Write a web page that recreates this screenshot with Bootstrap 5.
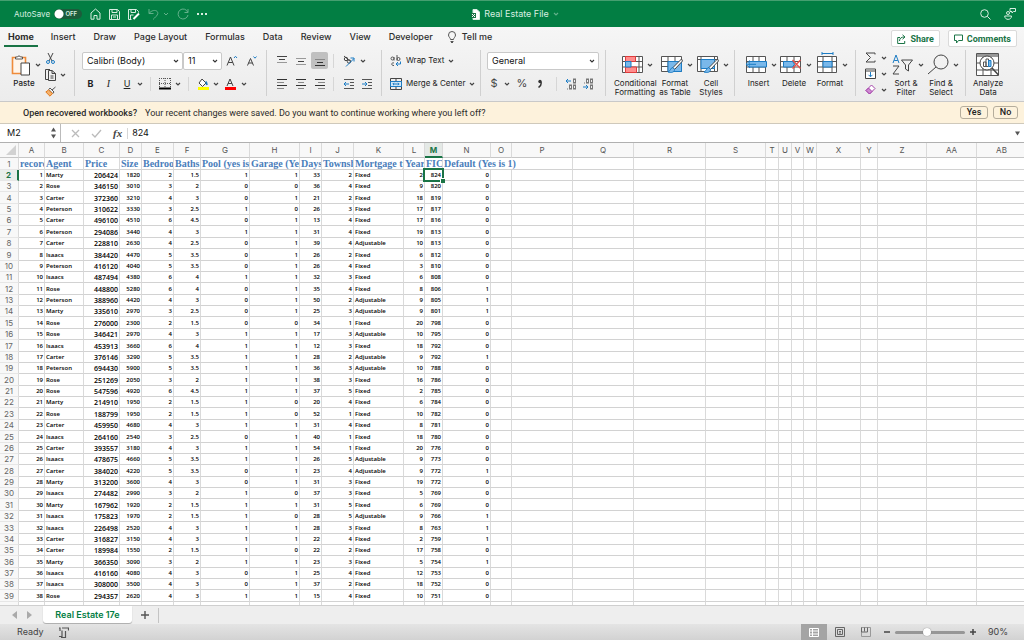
<!DOCTYPE html>
<html lang="en">
<head>
<meta charset="utf-8">
<meta name="viewport" content="width=device-width, initial-scale=1">
<title>Real Estate File</title>
<link href="https://cdn.jsdelivr.net/npm/bootstrap@5.3.0/dist/css/bootstrap.min.css" rel="stylesheet">
<style>
:root{--xl:#027e43;--xl-dark:#1a7446;--ink:#333;--line:#d2d2d2}
body{font-family:Inter,"Liberation Sans",sans-serif;font-size:9px;line-height:12px;color:#222;background:#eee}
button{background:none;border:0;padding:0;color:inherit;line-height:inherit}
svg{display:block;flex:none}
svg:not([fill]){fill:none}
svg:not([stroke]){stroke:currentColor}
.chev{width:6px;height:6px;color:#444;stroke-width:1.2}
.chev.dim{color:inherit}
.titlebar{height:27px;background:var(--xl);border-top:1px solid #459f70;color:#d8eee1;padding:0 8px 0 14px}
.titlebar>div{flex:1 1 0}
.tools{gap:8px}
.dim{opacity:.45}
.autosave{position:relative;gap:4px;font-size:8px}
.autosave input{appearance:none;width:28px;height:10px;margin:0;border-radius:5px;background:radial-gradient(circle at 5px 5px,#fff 4px,transparent 5px),#1c5c3b}
.autosave span{position:absolute;right:5px;font-size:6px;line-height:10px;font-weight:600}
.doctitle{font-size:9px}
.ribbon{background:linear-gradient(#f6f6f6,#ececec);border-bottom:1px solid #c9c9c9;height:75px}
.tabs{height:20px;padding:0 7px 0 4px;font-size:9px;font-weight:500;color:#2d2d2d}
.tabs a{color:inherit;text-decoration:none;line-height:20px;height:20px;border-bottom:2px solid transparent;white-space:nowrap;margin-right:18px}
.tabs a.active{font-weight:700;border-color:var(--xl-dark);margin-right:13px;padding:0 4px}
.tabs .tell{gap:5px;margin-left:-4px}
.tabs .tell svg{margin-top:4px}
.pill{background:#fff;border:1px solid #dadada;border-radius:2px;height:17px;font-family:Roboto,sans-serif;font-size:9px;font-weight:700;color:var(--xl-dark);gap:4px;padding:0 5px}
.tools-row{height:54px;padding:3px 0 5px}
.grp{height:46px;border-right:1px solid #d0d0d0;flex:none;font-size:8px;line-height:9px;font-weight:500}
.grp:last-child{border:0}
.bar{display:grid;align-items:center;justify-items:center;height:17px}
.vr1{width:1px;height:14px;background:#d6d6d6}
.pick{appearance:none;width:100%;height:18px;border:1px solid #c9c9c9;border-radius:2px;font-size:9px;line-height:12px;padding:0 4px;color:#111;
 background:#fff url("data:image/svg+xml,%3Csvg xmlns='http://www.w3.org/2000/svg' width='6' height='6'%3E%3Cpath d='M1 2l2 2 2-2' fill='none' stroke='%23333' stroke-width='1.1'/%3E%3C/svg%3E") no-repeat right 3px center}
.on{background:#c0c0c0;border-radius:2px;width:17px;height:17px}
.g-paste{width:75px;padding-left:10px}
.g-font{width:192px;padding:2px 0 0 7px}
.g-align{width:115px;padding:2px 0 0 5px}
.g-wrap{width:99px;padding:2px 0 0 8px}
.g-num{width:125px;padding:2px 6px 0 6px}
.g-style{width:129px;padding-left:8px}
.g-cells{width:121px;padding-left:6px}
.g-edit{width:110px;padding-left:9px}
.g-align .bar+.bar,.wr+.wr{margin-top:6px}
.g-font .bar:first-child{grid-template-columns:101px 39px 20px 20px;height:18px;justify-items:start}
.g-font .bar:first-child button{justify-self:center}
.g-font .bar+.bar{grid-template-columns:17px 19px 18px 8px 13px 15px 12px 9px 19px 7px 21px 7px;margin-top:5px}
.g-align .bar{grid-template-columns:20px 18px 19px 9px 22px 14px}
.g-num .bar{grid-template-columns:14px 12px 18px 18px 14px 16px 18px;margin-top:5px}
.sym{font-size:11px;font-weight:400;color:#444}
.wr{height:17px;gap:4px}
.big{flex:none;text-align:center}
.big .pic{height:29px;gap:4px;justify-content:center;padding-left:4px}
.small-col{gap:5px}
.notice{height:22px;background:#fdf2dc;border-bottom:1px solid #cfc9bb;padding:0 6px 0 23px;font-family:Roboto,"Liberation Sans",sans-serif;font-size:9px;color:#2b2b2b}
.notice b{font-weight:500}
.notice .ask{height:13px;line-height:11px;border:1px solid #b5ad9c;border-radius:3px;width:28px;font-weight:500;color:#222}
.fbar{height:19px;background:#fff;border-bottom:1px solid #b0b0b0}
.fbar input{border:0;padding:0;outline:0;background:none;font-size:9px;color:#111}
.namebox{width:61px;border-right:1px solid #bbb;padding:0 3px 0 7px}
.namebox input{width:40px}
.fx{font:italic 700 11px "Liberation Serif",serif;color:#444}
.sheet{flex:1 1 0;min-height:0;overflow:hidden;background:#fff;border-bottom:1px solid #cfcfcf}
.cells{table-layout:fixed;width:100%;border-collapse:separate;border-spacing:0;font-family:"Open Sans",sans-serif;font-weight:600;font-size:6px;line-height:9px;color:#000}
.cells td,.cells th{padding:1px 1px 0;border-right:1px solid #dadada;border-bottom:1px solid var(--line);white-space:nowrap;overflow:hidden;height:11px;text-align:right}
.cells thead th{height:15px;font:400 8px/13px Inter,sans-serif;text-align:center;background:#f8f8f8;color:#555;border-bottom-color:#c6c6c6;position:relative}
.cells tbody th{font:400 8px/9px Inter,sans-serif;text-align:center;background:#f8f8f8;color:#666;border-bottom-color:#e6e6e6}
.cells tbody tr:first-child>*,.cells tbody tr:nth-child(8n+4)>*,.cells tbody tr:nth-child(8n+7)>*,.cells tbody tr:nth-child(8n+9)>*{height:12px}
.cells td.txt{text-align:left}
.cells td.price{font-size:7px}
.cells .names td{font:700 10px/10px "Liberation Serif",serif;color:#4a7ebb;text-align:left}
.cells .names .spill{overflow:visible}
.cells thead th.cur{background:#e4e9e6;color:var(--xl-dark);font-weight:700;border-bottom:2px solid var(--xl-dark);line-height:12px}
.cells tbody th.cur{color:var(--xl-dark);font-weight:700;border-right:2px solid var(--xl-dark);background:#e9eeeb}
.cells td.sel{position:relative;overflow:visible}
.cells td.sel::before{content:"";position:absolute;inset:-2px;border:2px solid var(--xl-dark)}
.cells td.sel::after{content:"";position:absolute;right:-3px;bottom:-3px;width:5px;height:5px;background:var(--xl-dark);border:1px solid #fff;border-width:1px 0 0 1px}
.corner{position:absolute;right:2px;bottom:2px;border:5px solid transparent;border-right-color:#d2d2d2;border-bottom-color:#d2d2d2}
.sheettabs{height:18px;padding-left:12px;background:#eee}
.sheettabs .cur{background:#fff;color:var(--xl);font-weight:600;font-size:9px;width:89px;height:17px;border-radius:0 0 3px 3px;box-shadow:0 1px 1px #aaa;margin-left:11px;align-self:flex-start}
.sheettabs .add{width:27px;height:15px;border-right:1px solid #c4c4c4}
.status{height:16px;background:linear-gradient(#e4e4e4,#d2d2d2);padding:0 16px 0 17px;color:#444}
.view{width:26px;height:16px;color:#666}
.view.cur{background:#a4a4a4;color:#fff}
.zoom{appearance:none;width:70px;height:3px;border-radius:2px;background:#979797;margin:0 5px}
.zoom::-webkit-slider-thumb{appearance:none;width:8px;height:8px;border-radius:50%;background:#fff;box-shadow:0 0 1px #666}
</style>
</head>
<body class="d-flex flex-column vh-100 overflow-hidden">
<svg width="0" height="0" class="position-absolute" aria-hidden="true">
 <symbol id="chev" viewBox="0 0 6 6"><path d="M1 2l2 2 2-2"/></symbol>
 <symbol id="brush" viewBox="0 0 16 16"><path d="M14.500 1L6 9.500l1.500 2L15.500 3z" fill="#fff" stroke="#444"/><path d="M6 9.500C3.500 9.500 4 12.500 1 14c3 1 6.500.5 6.500-2.500z" fill="#7ab8ea" stroke="#1c7cc4"/></symbol>
</svg>

<header class="titlebar d-flex align-items-center flex-shrink-0">
 <div class="tools d-flex align-items-center">
  <label class="autosave d-flex align-items-center">AutoSave <input type="checkbox"><span>OFF</span></label>
  <button aria-label="Home"><svg width="11" height="12" viewBox="0 0 11 12"><path d="M1 5l4.500-4L10 5v6.200H7V7.500H4v3.700H1z"/></svg></button>
  <button aria-label="Save"><svg width="11" height="11" viewBox="0 0 11 11"><path d="M.5.5h8l2 2v8H.5zM3 .5v3h5v-3M2.500 10.500V6h6v4.500M4 8h3"/></svg></button>
  <button aria-label="Save as"><svg width="12" height="11" viewBox="0 0 12 11"><path d="M10.500 3.500V2.500l-2-2h-8v10h3M3 .5v3h4.500v-3M2.500 10.500V6h3"/><path d="M11 4.500L5.500 10" stroke-width="2" stroke="#fff"/></svg></button>
  <button class="dim d-flex align-items-center gap-1" aria-label="Undo"><svg width="11" height="12" viewBox="0 0 11 12"><path d="M1 1v4.500h4.500M1.200 5.200C4 1.500 10 1.500 9.800 5.500c-.3 2-2.800 4-4.800 6"/></svg><svg width="6" height="6"><use href="#chev"/></svg></button>
  <button class="dim" aria-label="Redo"><svg width="12" height="12" viewBox="0 0 12 12"><path d="M11 1v3.500H7.500M10.800 4.300A5 5 0 1 0 11 7"/></svg></button>
  <button aria-label="More"><svg width="10" height="2" viewBox="0 0 10 2" fill="currentColor" stroke="none"><path d="M0 0h2v2H0zM4 0h2v2H4zM8 0h2v2H8z"/></svg></button>
 </div>
 <div class="doctitle d-flex align-items-center justify-content-center gap-1">
  <svg width="9" height="11" viewBox="0 0 9 11"><path d="M2 .5h4l2.500 2.500v7.500H2z" fill="#fff" stroke="#d8eee1"/><path d="M0 4h5v5H0z" fill="#1a7446" stroke="none"/><path d="M1 5l3 3M4 5L1 8" stroke="#fff"/></svg>
  <span>Real Estate File</span><svg class="chev dim"><use href="#chev"/></svg>
 </div>
 <div class="d-flex align-items-center justify-content-end" style="gap:13px">
  <button aria-label="Search"><svg width="11" height="11" viewBox="0 0 11 11"><circle cx="4.500" cy="4.500" r="3.800"/><path d="M7.300 7.300L10.500 10.500"/></svg></button>
  <button aria-label="Collaborate"><svg width="12" height="12" viewBox="0 0 12 12"><path d="M6 .5h5.500v3H9.500L8 5V3.500H6zM.7 8h6.800c0 4.500-6.800 4.500-6.800 0z"/><circle cx="4" cy="5" r="1.500"/></svg></button>
 </div>
</header>

<section class="ribbon flex-shrink-0">
 <nav class="tabs d-flex align-items-start">
  <a href="#" class="active">Home</a><a href="#">Insert</a><a href="#">Draw</a><a href="#">Page Layout</a><a href="#">Formulas</a><a href="#">Data</a><a href="#">Review</a><a href="#">View</a><a href="#">Developer</a>
  <a href="#" class="tell d-flex align-items-start"><svg width="10" height="12" viewBox="0 0 10 12" stroke="#555"><path d="M3.500 8.500C3.500 7 1.500 6 1.500 4a3.500 3.500 0 0 1 7 0c0 2-2 3-2 4.500zM3.500 10.500h3M4 11.500h2"/></svg>Tell me</a>
  <div class="ms-auto d-flex gap-2" style="padding-top:3px">
   <button class="pill d-flex align-items-center"><svg width="9" height="10" viewBox="0 0 9 10"><path d="M3 3.500H.7v6h7V7M2.500 7c0-3 2-4 5-4M5.500 .8L8 3 5.500 5.200"/></svg>Share</button>
   <button class="pill d-flex align-items-center"><svg width="9" height="10" viewBox="0 0 9 10"><path d="M.5 1h8v5.500H4.500L2.500 9V6.500h-2z"/></svg>Comments</button>
  </div>
 </nav>
 <div class="tools-row d-flex">
  <div class="grp g-paste d-flex">
   <div class="big" style="width:28px"><div class="pic d-flex align-items-center"><svg width="20" height="22" viewBox="0 0 20 22"><path d="M1.500 3.500h13v16h-13z" stroke="#ef8b3a" stroke-width="1.600" fill="#fff5ea"/><path d="M4.500 5V3h2a1.600 1.600 0 0 1 3 0h2v2z" fill="#fff" stroke="#555"/><path d="M10 9h8.500v12H10z" fill="#fff" stroke="#444"/></svg><svg class="chev"><use href="#chev"/></svg></div>Paste</div>
   <div class="small-col d-flex flex-column" style="margin-left:7px;padding-top:3px">
    <button aria-label="Cut"><svg width="11" height="11" viewBox="0 0 11 11"><path d="M3 0l4 8M8 0L4 8" stroke="#444"/><circle cx="3" cy="9" r="1.500" stroke="#1c7cc4"/><circle cx="8" cy="9" r="1.500" stroke="#1c7cc4"/></svg></button>
    <button class="d-flex align-items-center gap-1" aria-label="Copy"><svg width="11" height="12" viewBox="0 0 11 12" stroke="#444"><path d="M3 10.500H.5v-10H5M3.500 1.500H7l3.500 3v7h-7zM7 1.500v3h3.500M5.500 7h3M5.500 9h3"/></svg><svg class="chev"><use href="#chev"/></svg></button>
    <button aria-label="Format painter"><svg width="12" height="11" viewBox="0 0 12 11"><path d="M10.500 1L7 4M5 2l4 4-1.200 1.500L3.800 3.500z" stroke="#555" fill="#fff"/><path d="M3.500 4L.8 6 5 10.200 7.500 7.500z" fill="#f6b26b" stroke="#e07a1f"/></svg></button>
   </div>
  </div>
  <div class="grp g-font">
   <div class="bar">
    <select class="pick" aria-label="Font"><option>Calibri (Body)</option></select>
    <select class="pick" aria-label="Font size"><option>11</option></select>
    <button aria-label="Increase font size"><svg width="12" height="12" viewBox="0 0 12 12"><path d="M1 10.500L4.500 2l3.500 8.500M2.200 7.500h4.600" stroke="#444"/><path d="M8 3l1.500-1.700L11 3" stroke="#1c7cc4"/></svg></button>
    <button aria-label="Decrease font size"><svg width="12" height="12" viewBox="0 0 12 12"><path d="M1.500 10.500l3-7 3 7M2.500 8h4" stroke="#444"/><path d="M7.500 1.500L9 3.200l1.500-1.700" stroke="#1c7cc4"/></svg></button>
   </div>
   <div class="bar">
    <button class="fw-bold" style="font-size:9px">B</button><button style="font:italic 10px 'Liberation Serif',serif">I</button><button class="text-decoration-underline" style="font-size:9px;font-weight:400">U</button><svg class="chev"><use href="#chev"/></svg><i class="vr1"></i>
    <button aria-label="Borders"><svg width="12" height="12" viewBox="0 0 12 12" stroke="#555"><path d="M.5 0v10M6 0v10M11.500 0v10M0 .5h12M0 5.500h12" stroke-dasharray="1 1"/><path d="M0 10.500h12" stroke="#000" stroke-width="2"/></svg></button><svg class="chev"><use href="#chev"/></svg><i class="vr1"></i>
    <button aria-label="Fill colour"><svg width="12" height="12" viewBox="0 0 12 12"><path d="M5 1l4 4-3.500 3.500L2 5z" stroke="#444" fill="#fff"/><path d="M9 3.500l1 3.500" stroke="#1c7cc4" stroke-width="1.800"/><path d="M1 10.500h11" stroke="#ff0" stroke-width="3"/></svg></button><svg class="chev"><use href="#chev"/></svg>
    <button aria-label="Font colour"><svg width="12" height="12" viewBox="0 0 12 12"><path d="M3 8l3-7 3 7M4 5.500h4" stroke="#444"/><path d="M1 10.500h11" stroke="#f00" stroke-width="3"/></svg></button><svg class="chev"><use href="#chev"/></svg>
   </div>
  </div>
  <div class="grp g-align">
   <div class="bar">
    <button aria-label="Top align"><svg width="12" height="12" viewBox="0 0 12 12" stroke="#444"><path d="M1 1.500h10M3 4.500h6"/><path d="M1 7.500h10" stroke="#999"/></svg></button>
    <button aria-label="Middle align"><svg width="12" height="12" viewBox="0 0 12 12" stroke="#999"><path d="M1 3.500h10M1 9.500h10"/><path d="M3 6.500h6" stroke="#444"/></svg></button>
    <button class="on d-flex align-items-center justify-content-center" aria-label="Bottom align"><svg width="12" height="12" viewBox="0 0 12 12" stroke="#333"><path d="M1 4.500h10" stroke="#888"/><path d="M3 7.500h6M1 10.500h10"/></svg></button>
    <i class="vr1"></i>
    <button aria-label="Orientation"><svg width="12" height="12" viewBox="0 0 12 12"><circle cx="3" cy="4" r="1.700" stroke="#444"/><circle cx="6" cy="6.500" r="1.700" stroke="#444"/><path d="M1 1l7 6" stroke="#444"/><path d="M3 11.500l8-8M7.500 3H11v3.500" stroke="#1c7cc4"/></svg></button>
    <svg class="chev" style="justify-self:start"><use href="#chev"/></svg>
   </div>
   <div class="bar">
    <button aria-label="Align left"><svg width="12" height="10" viewBox="0 0 12 10"><path d="M1 .5h10M1 6.500h10" stroke="#333"/><path d="M1 3.500h7M1 9.500h7" stroke="#888"/></svg></button>
    <button aria-label="Centre"><svg width="12" height="10" viewBox="0 0 12 10"><path d="M1 .5h10M1 6.500h10" stroke="#333"/><path d="M3 3.500h6M3 9.500h6" stroke="#888"/></svg></button>
    <button aria-label="Align right"><svg width="12" height="10" viewBox="0 0 12 10"><path d="M1 .5h10M1 6.500h10" stroke="#333"/><path d="M4 3.500h7M4 9.500h7" stroke="#888"/></svg></button>
    <i class="vr1"></i>
    <button aria-label="Decrease indent"><svg width="12" height="10" viewBox="0 0 12 10"><path d="M1 .5h10M7 3.500h4M7 6.500h4M1 9.500h10" stroke="#555"/><path d="M6 5H1M3 3L1 5l2 2" stroke="#1c7cc4"/></svg></button>
    <button aria-label="Increase indent"><svg width="12" height="10" viewBox="0 0 12 10"><path d="M1 .5h10M7 3.500h4M7 6.500h4M1 9.500h10" stroke="#555"/><path d="M1 5h5M4 3l2 2-2 2" stroke="#1c7cc4"/></svg></button>
   </div>
  </div>
  <div class="grp g-wrap">
   <button class="wr d-flex align-items-center"><svg width="12" height="12" viewBox="0 0 12 12"><circle cx="2.500" cy="3.500" r="1.500" stroke="#555"/><path d="M4 2v3.500M7 0v5.500M4 8c-3-1-3 3 0 2.500" stroke="#555"/><circle cx="8.500" cy="4" r="1.500" stroke="#555"/><path d="M10.500 6.500v2.500H6M8 7L6 9l2 2" stroke="#1c7cc4"/></svg>Wrap Text<svg class="chev"><use href="#chev"/></svg></button>
   <button class="wr d-flex align-items-center"><svg width="12" height="12" viewBox="0 0 12 12"><path d="M.5.5h11v11H.5zM6 .5v3M6 8.500v3" stroke="#444"/><path d="M.5 3.500h11v5H.5z" fill="#d3e8f8" stroke="#1c7cc4"/><path d="M3 6h6M4 4.800L2.800 6 4 7.200M8 4.800L9.200 6 8 7.200" stroke="#1c7cc4"/></svg>Merge &amp; Center<svg class="chev"><use href="#chev"/></svg></button>
  </div>
  <div class="grp g-num">
   <select class="pick d-block" aria-label="Number format"><option>General</option></select>
   <div class="bar">
    <button class="sym">$</button><svg class="chev"><use href="#chev"/></svg><button class="sym">%</button><button aria-label="Comma style"><svg width="6" height="9" viewBox="0 0 6 9"><path d="M1.500 8.500C3.500 7.500 4.500 5.500 4 3" stroke="#333" stroke-width="1.400"/><circle cx="3" cy="2.500" r="1.700" fill="#333" stroke="none"/></svg></button><i class="vr1"></i>
    <button aria-label="Increase decimal"><svg width="12" height="12" viewBox="0 0 12 12"><path d="M6 3H1M3 1L1 3l2 2" stroke="#1c7cc4"/><g stroke="#777"><rect x="8.500" y="1" width="2" height="4"/><rect x="4.500" y="7" width="2" height="4"/><rect x="8.500" y="7" width="2" height="4"/><path d="M2.500 10.500v1"/></g></svg></button>
    <button aria-label="Decrease decimal"><svg width="12" height="12" viewBox="0 0 12 12"><path d="M1 9h5M4 7l2 2-2 2" stroke="#1c7cc4"/><g stroke="#777"><rect x="4.500" y="1" width="2" height="4"/><rect x="8.500" y="1" width="2" height="4"/><rect x="8.500" y="7" width="2" height="4"/><path d="M2.500 4.500v1"/></g></svg></button>
   </div>
  </div>
  <div class="grp g-style d-flex">
   <button class="big" style="width:42px"><span class="pic d-flex align-items-center"><svg width="21" height="17" viewBox="0 0 21 17"><path d="M.5.5h20v16H.5zM.5 5.500h20M.5 11h20M17 .5v16" stroke="#555" fill="#fff"/><path d="M3.500.5h10v5h-10zM3.500 11h11v5.500h-11z" fill="#ff8d8d" stroke="#e03c3c"/><path d="M3.500 5.500H9V11H3.500z" fill="#7ab8ea" stroke="#1c7cc4"/></svg><svg class="chev"><use href="#chev"/></svg></span>Conditional<br>Formatting</button>
   <button class="big" style="width:38px"><span class="pic d-flex align-items-center"><svg width="22" height="19" viewBox="0 0 22 19"><path d="M.5 1.500h20v15H.5zM.5 6.500h20M.5 11.500h20M7 1.500v15M14 1.500v15" stroke="#555" fill="#fff"/><path d="M7 6.500h13.500v10H7z" fill="#7ab8ea" stroke="#1c7cc4"/><use href="#brush" x="6" y="3" width="16" height="16"/></svg><svg class="chev"><use href="#chev"/></svg></span>Format<br>as Table</button>
   <button class="big" style="width:34px"><span class="pic d-flex align-items-center"><svg width="22" height="19" viewBox="0 0 22 19"><path d="M.5 1.500h20v15H.5zM.5 4.500h20M4 1.500v15M17.500 1.500v15" stroke="#555" fill="#fff"/><path d="M4 4.500h13.500v9H4z" fill="#7ab8ea" stroke="#1c7cc4"/><use href="#brush" x="6" y="3" width="16" height="16"/></svg><svg class="chev"><use href="#chev"/></svg></span>Cell<br>Styles</button>
  </div>
  <div class="grp g-cells d-flex">
   <button class="big align-self-start" style="width:35px"><span class="pic d-flex align-items-center"><svg width="22" height="17" viewBox="0 0 22 17"><path d="M1.500.5h19v16h-19zM1.500 5.500h19M1.500 11h19M8 .5v16M14 .5v16" stroke="#555" fill="#fff"/><path d="M4 5.500h17.500V11H4z" fill="#7ab8ea" stroke="#1c7cc4"/><path d="M11 8.300H1M5 4.500L1 8.300l4 3.700" stroke="#1c7cc4"/></svg><svg class="chev"><use href="#chev"/></svg></span>Insert</button>
   <button class="big align-self-start" style="width:36px"><span class="pic d-flex align-items-center"><svg width="22" height="17" viewBox="0 0 22 17"><path d="M.5.5h20v16H.5zM.5 5.500h20M.5 11h20M7 .5v16M14 .5v16" stroke="#555" fill="#fff"/><path d="M3.500 5.500h9l2 2.700-2 2.800h-9z" fill="#7ab8ea" stroke="#1c7cc4"/><path d="M12.500 4l8 8.500M20.500 4l-8 8.500" stroke="#e8504b" stroke-width="1.300"/></svg><svg class="chev"><use href="#chev"/></svg></span>Delete</button>
   <button class="big align-self-start" style="width:36px"><span class="pic d-flex align-items-center"><svg width="21" height="25" viewBox="0 0 21 25"><path d="M.5 4.500h19v16H.5zM.5 9.500h19M.5 15h19M6 4.500v16M15 4.500v16" stroke="#555" fill="#fff"/><path d="M6 9.500h9V15H6z" fill="#7ab8ea" stroke="#1c7cc4"/><path d="M5 1.500h11M5 0v3M16 0v3" stroke="#1c7cc4"/></svg><svg class="chev"><use href="#chev"/></svg></span>Format</button>
  </div>
  <div class="grp g-edit d-flex">
   <div class="small-col d-flex flex-column" style="padding-top:2px;width:24px">
    <button class="d-flex align-items-center" style="gap:5px" aria-label="AutoSum"><svg width="11" height="11" viewBox="0 0 11 11" stroke="#444"><path d="M10 2.500V1H1l4.500 4.500L1 10h9V8.500"/></svg><svg class="chev"><use href="#chev"/></svg></button>
    <button class="d-flex align-items-center" style="gap:5px" aria-label="Fill"><svg width="11" height="11" viewBox="0 0 11 11"><path d="M.5 1h10v9.500H.5zM.5 3h10" stroke="#444" fill="#fff"/><path d="M5.500 4v4.500M3.500 6.800l2 2 2-2" stroke="#1c7cc4"/></svg><svg class="chev"><use href="#chev"/></svg></button>
    <button class="d-flex align-items-center" style="gap:5px" aria-label="Clear"><svg width="11" height="11" viewBox="0 0 11 11"><path d="M6.500 1L10 4.500 4.500 10 1 6.500z" fill="#fff" stroke="#a33fa8"/><path d="M3.500 4L7 7.500 4.500 10 1 6.500z" fill="#cf8ad2" stroke="#a33fa8"/></svg><svg class="chev"><use href="#chev"/></svg></button>
   </div>
   <button class="big" style="width:34px"><span class="pic d-flex align-items-center"><svg width="22" height="21" viewBox="0 0 22 21"><path d="M1 9l3-8 3 8M2.200 6.500h3.600" stroke="#1c7cc4"/><path d="M1 12h6l-6 8h6" stroke="#444"/><path d="M9.500 6h11l-4 5v6l-3-2v-4z" stroke="#444"/></svg><svg class="chev"><use href="#chev"/></svg></span>Sort &amp;<br>Filter</button>
   <button class="big" style="width:36px"><span class="pic d-flex align-items-center"><svg width="22" height="21" viewBox="0 0 22 21" stroke="#444"><circle cx="14" cy="8" r="7"/><path d="M9 13l-8 7"/></svg><svg class="chev"><use href="#chev"/></svg></span>Find &amp;<br>Select</button>
  </div>
  <div class="grp" style="padding-left:7px">
   <button class="big"><span class="pic d-flex align-items-center p-0"><svg width="24" height="24" viewBox="0 0 24 24"><path d="M.5.5h22v22H.5zM.5 17h22M7 4v19M15 4v19M.5 10h22" stroke="#555" fill="#fff"/><path d="M1 1h21v3H1z" fill="#999" stroke="none"/><circle cx="11" cy="10" r="7" fill="#fff" stroke="#444"/><path d="M16 15l6.500 7" stroke="#444" stroke-width="1.500"/><path d="M7.500 9H10v4.500H7.500zM10 6h2.500v7.500H10z" stroke="#555"/><path d="M12.500 7.500H15v6h-2.500z" fill="#7ab8ea" stroke="#1c7cc4"/></svg></span>Analyze<br>Data</button>
  </div>
 </div>
</section>

<div class="notice d-flex align-items-center flex-shrink-0">
 <b>Open recovered workbooks?</b><span class="ms-2">Your recent changes were saved. Do you want to continue working where you left off?</span>
 <button class="ask ms-auto">Yes</button><button class="ask" style="width:25px;margin-left:5px">No</button>
</div>

<div class="fbar d-flex align-items-center flex-shrink-0">
 <div class="namebox d-flex align-items-center justify-content-between h-100"><input aria-label="Name box" value="M2"><svg width="7" height="12" viewBox="0 0 7 12"><path d="M1 4.500l2.500-4 2.500 4zM1 7.500l2.500 4 2.500-4z" fill="#555" stroke="none"/></svg></div>
 <button style="margin-left:10px" aria-label="Cancel"><svg width="9" height="9" viewBox="0 0 9 9" stroke="#bbb" stroke-width="1.300"><path d="M1 1l7 7M8 1L1 8"/></svg></button>
 <button style="margin-left:11px" aria-label="Enter"><svg width="11" height="9" viewBox="0 0 11 9" stroke="#bbb" stroke-width="1.300"><path d="M1 5l3 3 6-7"/></svg></button>
 <button class="fx" style="margin:0 5px 0 11px">fx</button><i class="vr1" style="height:11px"></i>
 <input class="flex-grow-1 ms-1" aria-label="Formula" value="824">
 <button class="me-1" aria-label="Expand"><svg width="5" height="5" viewBox="0 0 5 5"><path d="M0 .5h5l-2.500 4z" fill="#555" stroke="none"/></svg></button>
</div>

<main class="sheet"><table class="cells"><colgroup id="cols"></colgroup><thead><tr id="letters"></tr></thead><tbody id="rows"></tbody></table></main>

<div class="sheettabs d-flex align-items-center flex-shrink-0">
 <svg width="20" height="8" viewBox="0 0 20 8"><path d="M5 0v8L0 4zM15 0v8l5-4z" fill="#aaa" stroke="none"/></svg>
 <button class="cur">Real Estate 17e</button>
 <button class="add d-flex align-items-center justify-content-center" aria-label="Add sheet"><svg width="8" height="8" viewBox="0 0 8 8" stroke="#555" stroke-width="1.400"><path d="M4 0v8M0 4h8"/></svg></button>
</div>
<footer class="status d-flex align-items-center flex-shrink-0">
 <span>Ready</span>
 <svg class="me-auto" style="margin-left:14px" width="11" height="11" viewBox="0 0 11 11" stroke="#555"><path d="M4 1h6.500v2.500M4 3.500V9.500H1M7.500 4v6.500H3M1 1h1v3" stroke-width="1.200"/></svg>
 <button class="view cur d-flex align-items-center justify-content-center" aria-label="Normal view"><svg width="10" height="9" viewBox="0 0 10 9"><path d="M.5.5h9v8h-9zM.5 3h9M.5 6h9M3.500.5v8"/></svg></button>
 <button class="view d-flex align-items-center justify-content-center" aria-label="Page layout view"><svg width="10" height="10" viewBox="0 0 10 10"><path d="M.5.5h9v9h-9zM2.500 2.500h5v5h-5zM4 4.500h2M4 6h2"/></svg></button>
 <button class="view d-flex align-items-center justify-content-center" aria-label="Page break view"><svg width="10" height="10" viewBox="0 0 10 10"><path d="M.5.5h9v9h-9z" stroke="#999"/><path d="M.5.500v4.500h6V.5M3.500.5v4"/></svg></button>
 <svg style="margin-left:5px" width="6" height="6" viewBox="0 0 6 6" stroke-width="1.500"><path d="M0 3h6"/></svg>
 <input class="zoom" type="range" min="10" max="150" value="74" aria-label="Zoom">
 <svg width="6" height="6" viewBox="0 0 6 6" stroke-width="1.500"><path d="M0 3h6M3 0v6"/></svg>
 <span style="margin-left:12px">90%</span>
</footer>

<script>
const widths=[19,26,39,36,22,32,27,49,50,22,32,50,21,18,48,21,61,61,72,60,13,13,12,13,44,17,49,50,50];
const letters='A B C D E F G H I J K L M N O P Q R S T U V W X Y Z AA AB'.split(' ');
const names=['record','Agent','Price','Size','Bedrooms','Baths','Pool (yes is 1)','Garage (Yes is 1)','Days','Township','Mortgage type','Year','FICO','Default (Yes is 1)'];
const data=`Marty 206424 1820 2 1.5 1 1 33 2 Fixed 2 824 0
Rose 346150 3010 3 2 0 0 36 4 Fixed 9 820 0
Carter 372360 3210 4 3 0 1 21 2 Fixed 18 819 0
Peterson 310622 3330 3 2.5 1 0 26 3 Fixed 17 817 0
Carter 496100 4510 6 4.5 0 1 13 4 Fixed 17 816 0
Peterson 294086 3440 4 3 1 1 31 4 Fixed 19 813 0
Carter 228810 2630 4 2.5 0 1 39 4 Adjustable 10 813 0
Isaacs 384420 4470 5 3.5 0 1 26 2 Fixed 6 812 0
Peterson 416120 4040 5 3.5 0 1 26 4 Fixed 3 810 0
Isaacs 487494 4380 6 4 1 1 32 3 Fixed 6 808 0
Rose 448800 5280 6 4 0 1 35 4 Fixed 8 806 1
Peterson 388960 4420 4 3 0 1 50 2 Adjustable 9 805 1
Marty 335610 2970 3 2.5 0 1 25 3 Adjustable 9 801 1
Rose 276000 2300 2 1.5 0 0 34 1 Fixed 20 798 0
Rose 346421 2970 4 3 1 1 17 3 Adjustable 10 795 0
Isaacs 453913 3660 6 4 1 1 12 3 Fixed 18 792 0
Carter 376146 3290 5 3.5 1 1 28 2 Adjustable 9 792 1
Peterson 694430 5900 5 3.5 1 1 36 3 Adjustable 10 788 0
Rose 251269 2050 3 2 1 1 38 3 Fixed 16 786 0
Rose 547596 4920 6 4.5 1 1 37 5 Fixed 2 785 0
Marty 214910 1950 2 1.5 1 0 20 4 Fixed 6 784 0
Rose 188799 1950 2 1.5 1 0 52 1 Fixed 10 782 0
Carter 459950 4680 4 3 1 1 31 4 Fixed 8 781 0
Isaacs 264160 2540 3 2.5 0 1 40 1 Fixed 18 780 0
Carter 393557 3180 4 3 1 1 54 1 Fixed 20 776 0
Isaacs 478675 4660 5 3.5 1 1 26 5 Adjustable 9 773 0
Carter 384020 4220 5 3.5 0 1 23 4 Adjustable 9 772 1
Marty 313200 3600 4 3 0 1 31 3 Fixed 19 772 0
Isaacs 274482 2990 3 2 1 0 37 3 Fixed 5 769 0
Marty 167962 1920 2 1.5 1 1 31 5 Fixed 6 769 0
Isaacs 175823 1970 2 1.5 1 0 28 5 Adjustable 9 766 1
Isaacs 226498 2520 4 3 1 1 28 3 Fixed 8 763 1
Carter 316827 3150 4 3 1 1 22 4 Fixed 2 759 1
Carter 189984 1550 2 1.5 1 0 22 2 Fixed 17 758 0
Marty 366350 3090 3 2 1 1 23 3 Fixed 5 754 1
Isaacs 416160 4080 4 3 0 1 25 4 Fixed 12 753 0
Isaacs 308000 3500 4 3 0 1 37 2 Fixed 18 752 0
Rose 294357 2620 4 3 1 1 15 4 Fixed 10 751 0`.split('\n').map((r,i)=>[i+1,...r.split(' ')]);
const kind={1:'txt',2:'price',10:'txt'};
document.getElementById('cols').innerHTML=widths.map(w=>`<col style="width:${w}px">`).join('');
document.getElementById('letters').innerHTML='<th><span class="corner"></span></th>'+letters.map(l=>`<th${l==='M'?' class="cur"':''}>${l}</th>`).join('');
const blanks=n=>'<td></td>'.repeat(n);
let html='<tr class="names"><th>1</th>'+names.map((n,i)=>i===13?`<td class="spill" colspan="3">${n}</td>`:`<td>${n}</td>`).join('')+blanks(12)+'</tr>';
data.forEach((r,i)=>{html+=`<tr><th${i?'':' class="cur"'}>${i+2}</th>`+r.map((v,c)=>`<td class="${kind[c]||''}${i===0&&c===12?' sel':''}">${v}</td>`).join('')+blanks(14)+'</tr>';});
html+='<tr><th></th>'+blanks(28)+'</tr>';
document.getElementById('rows').innerHTML=html;
</script>
<script src="https://cdn.jsdelivr.net/npm/bootstrap@5.3.0/dist/js/bootstrap.bundle.min.js"></script>
</body>
</html>
